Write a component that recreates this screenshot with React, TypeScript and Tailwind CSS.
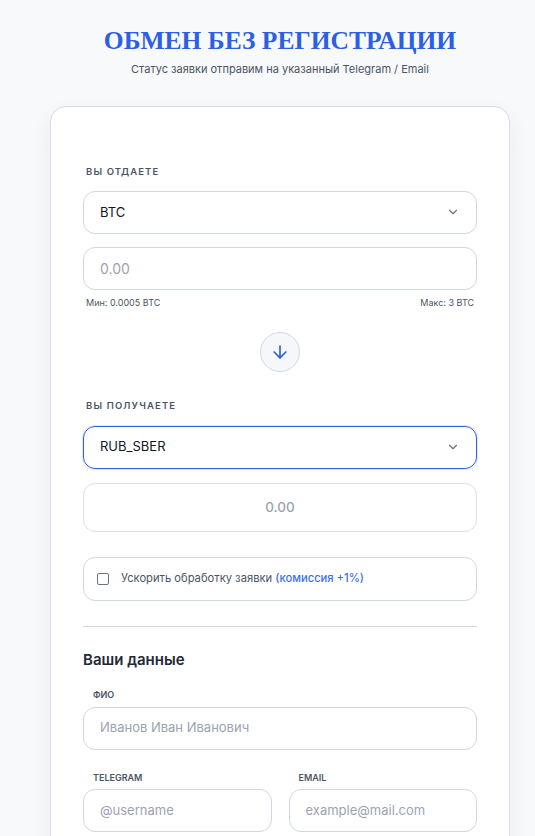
import React from 'react';

const Chevron = () => (
  <svg width="14" height="14" viewBox="0 0 24 24" fill="none" stroke="#6b7280" strokeWidth="2" strokeLinecap="round" strokeLinejoin="round">
    <path d="m6 9 6 6 6-6" />
  </svg>
);

const Label = ({ children, className = '' }: { children: React.ReactNode; className?: string }) => (
  <div className={`pl-[3px] text-[9.5px] font-semibold tracking-[0.12em] text-[#4b5563] uppercase ${className}`}>{children}</div>
);

export default function App() {
  return (
    <div className="min-h-[836px] bg-[#f8f9fb] font-['Inter',sans-serif] overflow-hidden">
      <div className="w-[560px]">
        <div className="flex flex-col items-center pt-[25px]">
          <h1 className="font-['Liberation_Serif',serif] font-bold text-[25.5px] leading-[32px] text-[#2c5fe3]">
            ОБМЕН БЕЗ РЕГИСТРАЦИИ
          </h1>
          <p className="mt-[4px] text-[11px] text-[#4b5563]">Статус заявки отправим на указанный Telegram / Email</p>
        </div>

        <div className="ml-[50px] w-[460px] mt-[28px] rounded-[16px] border border-[#d6dde8] bg-white shadow-[0_8px_24px_rgba(15,23,42,0.06)] px-[32px] pt-[58px] pb-[40px]">
          <Label>Вы отдаете</Label>
          <div className="mt-[12px] h-[43px] rounded-[12px] border border-[#cfd8e3] flex items-center justify-between pl-[16px] pr-[16px]">
            <span className="text-[13px] text-[#111827]">BTC</span>
            <Chevron />
          </div>
          <div className="mt-[13px] h-[43px] rounded-[12px] border border-[#cfd8e3] flex items-center pl-[16px]">
            <span className="text-[14px] text-[#9ca3af]">0.00</span>
          </div>
          <div className="mt-[6px] flex justify-between text-[9px] text-[#4b5563] px-[3px]">
            <span>Мин: 0.0005 BTC</span>
            <span>Макс: 3 BTC</span>
          </div>

          <div className="flex justify-center mt-[23px]">
            <div className="w-[40px] h-[40px] rounded-full border border-[#cfd8e3] bg-[#f5f7fb] flex items-center justify-center">
              <svg width="20" height="20" viewBox="0 0 24 24" fill="none" stroke="#2c5fe3" strokeWidth="2" strokeLinecap="round" strokeLinejoin="round">
                <path d="M12 5v14" />
                <path d="m19 12-7 7-7-7" />
              </svg>
            </div>
          </div>

          <Label className="mt-[27px]">Вы получаете</Label>
          <div className="mt-[12px] h-[43px] rounded-[12px] border border-[#2c5fe3] shadow-[0_0_0_1px_rgba(44,95,227,0.15)] flex items-center justify-between pl-[16px] pr-[16px]">
            <span className="text-[13px] text-[#111827]">RUB_SBER</span>
            <Chevron />
          </div>
          <div className="mt-[14px] h-[49px] rounded-[12px] border border-[#d9e0ea] flex items-center justify-center">
            <span className="text-[13.5px] font-medium text-[#9ca3af]">0.00</span>
          </div>

          <div className="mt-[25px] h-[44px] rounded-[12px] border border-[#cfd8e3] flex items-center pl-[13px]">
            <span className="w-[12px] h-[12px] rounded-[2px] border border-[#6b7280] bg-white" />
            <span className="ml-[12px] text-[11.2px] text-[#4b5563]">
              Ускорить обработку заявки <span className="font-medium text-[#3b6ff5]">(комиссия +1%)</span>
            </span>
          </div>

          <div className="mt-[25px] h-px bg-[#cfd8e3]" />

          <div className="mt-[22px] text-[15px] font-semibold text-[#1f2937]">Ваши данные</div>

          <div className="mt-[17px] text-[9px] font-semibold text-[#4b5563] pl-[10px]">ФИО</div>
          <div className="mt-[5px] h-[43px] rounded-[12px] border border-[#cfd8e3] flex items-center pl-[16px]">
            <span className="text-[13px] text-[#9ca3af]">Иванов Иван Иванович</span>
          </div>

          <div className="mt-[21px] grid grid-cols-2 gap-[17px]">
            <div>
              <div className="text-[9px] font-semibold text-[#4b5563] pl-[10px]">TELEGRAM</div>
              <div className="mt-[5px] h-[43px] rounded-[12px] border border-[#cfd8e3] flex items-center pl-[16px]">
                <span className="text-[13px] text-[#9ca3af]">@username</span>
              </div>
            </div>
            <div>
              <div className="text-[9px] font-semibold text-[#4b5563] pl-[10px]">EMAIL</div>
              <div className="mt-[5px] h-[43px] rounded-[12px] border border-[#cfd8e3] flex items-center pl-[16px]">
                <span className="text-[13px] text-[#9ca3af]">example@mail.com</span>
              </div>
            </div>
          </div>
        </div>
      </div>
    </div>
  );
}
